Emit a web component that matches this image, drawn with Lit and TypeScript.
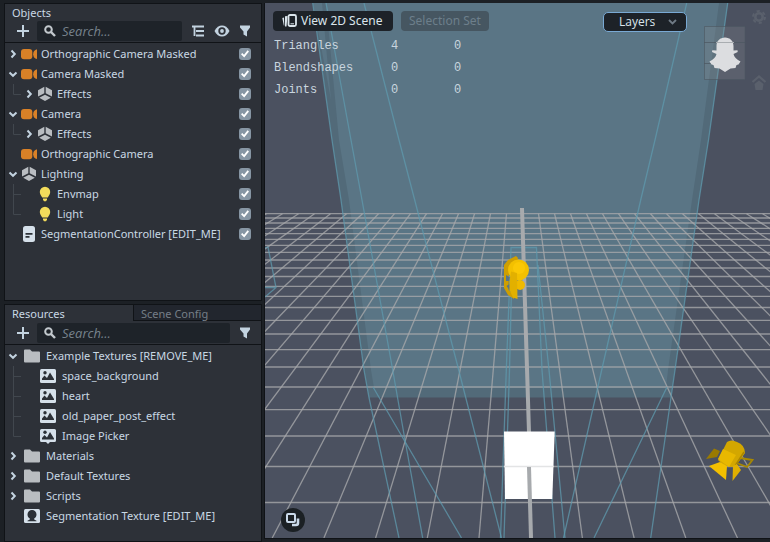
import { LitElement, html, svg, css, nothing, type TemplateResult } from "lit";
import { customElement, property } from "lit/decorators.js";

type Guide = "mid" | "last";
interface Item {
  id: string;
  name: string;
  icon: string;
  child?: Guide;
  open?: boolean;
}

const icons: Record<string, TemplateResult> = {
  camera: svg`<rect x="0" y="3" width="11.300" height="10.300" rx="3" fill="#d98127"/><path d="M16 3.300V13Q12.200 12 12.200 8.150 12.200 4.300 16 3.300Z" fill="#d98127"/>`,
  cube: svg`<g fill="#b9bdc1"><path d="M7.300 .8V7.200L1 10.600V4.200Z"/><path d="M8.700 .8V7.200L15 10.600V4.200Z"/><path d="M8 8.700l5.800 3.100L8 15 2.200 11.800Z"/></g>`,
  bulb: svg`<g fill="#f3dc5b"><path d="M8 .8a5.200 5.200 0 0 1 5.200 5.200c0 2.300-1.600 3.600-2.400 5.600H5.200C4.400 9.600 2.800 8.300 2.800 6A5.200 5.200 0 0 1 8 .8Z"/><path d="M6 12.500h4v1.200L9 15.200H7L6 13.700Z"/></g>`,
  script: svg`<rect x="2" y="0" width="12" height="16" rx="2.500" fill="#d5e0ea"/><path d="M4.500 7.800h7M4.500 10.800h4" stroke="#2b3037" stroke-width="1.800"/>`,
  folder: svg`<path d="M0 2.500Q0 1.500 1 1.500H6L8 3.500H15Q16 3.500 16 4.500V13.500Q16 14.500 15 14.500H1Q0 14.500 0 13.500Z" fill="#b9bdc1"/>`,
  image: svg`<rect x="0" y="1" width="16" height="14" rx="1.500" fill="#d5e0ea"/><circle cx="5" cy="4.700" r="1.700" fill="#2b3037"/><path d="M2 12V10.500L4.500 7.500 7 10 10 4.500 14 11V12Z" fill="#2b3037"/>`,
  picker: svg`<path d="M1.500 1H14.500Q16 1 16 2.500V12.500Q16 14 14.500 14H10L8 16 6 14H1.500Q0 14 0 12.500V2.500Q0 1 1.500 1Z" fill="#d5e0ea"/><circle cx="5" cy="4.200" r="1.700" fill="#2b3037"/><path d="M2 11.500V10L4.500 7 7 9.500 10 4 14 10.500V11.500Z" fill="#2b3037"/>`,
  segment: svg`<rect x="0" y="1" width="16" height="14" rx="1.500" fill="#d5e0ea"/><path d="M8 2a4.400 4.400 0 0 1 4.500 4.400c0 1.900-.9 3.300-2.300 4v1.100l2.300 1.200v.6H3.500v-.6l2.300-1.200v-1.100c-1.400-.7-2.300-2.100-2.300-4A4.400 4.400 0 0 1 8 2Z" fill="#2b3037"/>`,
};

const objects: Item[] = [
  { id: "ocm", name: "Orthographic Camera Masked", icon: "camera", open: false },
  { id: "cm", name: "Camera Masked", icon: "camera", open: true },
  { id: "cm-fx", name: "Effects", icon: "cube", child: "last", open: false },
  { id: "cam", name: "Camera", icon: "camera", open: true },
  { id: "cam-fx", name: "Effects", icon: "cube", child: "last", open: false },
  { id: "oc", name: "Orthographic Camera", icon: "camera" },
  { id: "lighting", name: "Lighting", icon: "cube", open: true },
  { id: "envmap", name: "Envmap", icon: "bulb", child: "mid" },
  { id: "light", name: "Light", icon: "bulb", child: "last" },
  { id: "segctl", name: "SegmentationController [EDIT_ME]", icon: "script" },
];

const resources: Item[] = [
  { id: "ext", name: "Example Textures [REMOVE_ME]", icon: "folder", open: true },
  { id: "space", name: "space_background", icon: "image", child: "mid" },
  { id: "heart", name: "heart", icon: "image", child: "mid" },
  { id: "paper", name: "old_paper_post_effect", icon: "image", child: "mid" },
  { id: "pick", name: "Image Picker", icon: "picker", child: "last" },
  { id: "mat", name: "Materials", icon: "folder", open: false },
  { id: "deft", name: "Default Textures", icon: "folder", open: false },
  { id: "scr", name: "Scripts", icon: "folder", open: false },
  { id: "segt", name: "Segmentation Texture [EDIT_ME]", icon: "segment" },
];

const reset = css`
  * { box-sizing: border-box; }
  svg { display: block; }
  button { appearance: none; border: 0; margin: 0; padding: 0; background: none; color: inherit; font: inherit; }
`;

@customElement("item-tree")
class ItemTree extends LitElement {
  @property({ attribute: false }) items: Item[] = [];
  @property({ type: Boolean }) checks = false;
  @property({ type: Boolean, reflect: true }) roomy = false;

  static styles = [reset, css`
    :host { display: block; padding-top: 1px; }
    .list { list-style: none; margin: 0; padding: 0; }
    .row { display: flex; align-items: center; height: 20px; padding-right: 10px; }
    .slot { width: 16px; height: 20px; flex: none; display: flex; align-items: center; justify-content: center; }
    .icon { flex: none; margin-right: 4px; }
    :host([roomy]) .icon { margin-left: 3px; margin-right: 6px; }
    .name { flex: 1; white-space: nowrap; line-height: 20px; }
    .check {
      appearance: none; flex: none; width: 12px; height: 12px; margin: 0;
      border-radius: 3px; background: #8796a4; display: grid; place-items: center;
    }
    .check:checked::before {
      content: ""; width: 8px; height: 8px; background: #fff;
      clip-path: polygon(0 52%, 16% 36%, 38% 58%, 82% 4%, 100% 20%, 40% 94%);
    }
  `];

  render() {
    return html`<ul class="list" role="tree">${this.items.map((i) => html`
      <li class="row" role="treeitem">
        ${i.child ? html`<svg class="slot" width="16" height="20" viewBox="0 0 16 20">
          <path d=${i.child === "mid" ? "M8.500 0V20M8 10.500H16" : "M8.500 0V10.500H16"} fill="none" stroke="#41474e"/></svg>` : nothing}
        ${i.open === undefined ? html`<span class="slot"></span>` : html`
          <button class="slot" aria-label=${(i.open ? "Collapse " : "Expand ") + i.name}>
            <svg width="10" height="10" viewBox="0 0 10 10"><path d=${i.open ? "M1.500 3.500 5 6.800 8.500 3.500" : "M3.500 1.500 6.800 5 3.500 8.500"} fill="none" stroke="#c3d3e0" stroke-width="2"/></svg>
          </button>`}
        <svg class="icon" width="16" height="16" viewBox="0 0 16 16">${icons[i.icon]}</svg>
        ${this.checks
          ? html`<label class="name" for=${i.id}>${i.name}</label><input class="check" type="checkbox" id=${i.id} checked>`
          : html`<span class="name">${i.name}</span>`}
      </li>`)}</ul>`;
  }
}

const searchIcon = html`<svg class="lens" width="12" height="12" viewBox="0 0 12 12"><circle cx="4.500" cy="4.500" r="3.300" fill="none" stroke="#c3c9ce" stroke-width="2"/><path d="M7 7l4 4" stroke="#c3c9ce" stroke-width="2.400"/></svg>`;
const plusIcon = html`<svg width="12" height="12" viewBox="0 0 12 12"><path d="M6 0V12M0 6H12" stroke="#c3d3e0" stroke-width="2"/></svg>`;
const filterIcon = html`<svg width="12" height="12" viewBox="0 0 12 12"><path d="M1 0.500H11V2.500L8 6.500V11.500L4.500 9.500V6.500L1 2.500Z" fill="#c3d3e0"/></svg>`;
const listIcon = html`<svg width="14" height="12" viewBox="0 0 14 12"><path d="M1 1.500H13M5 6H13M5 10.500H13M3.500 1.500V11" stroke="#c3d3e0" stroke-width="1.800" fill="none"/></svg>`;
const eyeIcon = html`<svg width="16" height="12" viewBox="0 0 16 12"><path d="M0.500 6C2.500 2.300 5 .5 8 .5S13.500 2.300 15.500 6C13.500 9.700 11 11.500 8 11.500S2.500 9.700.5 6Z" fill="#c3d3e0"/><circle cx="8" cy="6" r="3.700" fill="#2d3138"/><circle cx="8" cy="6" r="1.900" fill="#c3d3e0"/></svg>`;

const rows = [213.7, 218, 223, 228.3, 233.7, 239.3, 245.3, 252.3, 260, 268, 276.5, 286.3, 296.3, 307.5, 320.3, 334, 349.7, 367, 387, 409.7, 436, 466.5, 502.5];
const columns = Array.from({ length: 41 }, (_, n) => n - 20).filter((k) => k !== 0);

@customElement("scene-canvas")
class SceneCanvas extends LitElement {
  static styles = css`
    :host { display: block; }
    .scene { display: block; width: 100%; height: 100%; background: #4b5160; }
    .frustum { fill: none; stroke: #5f9aae; stroke-width: 1.3; stroke-opacity: .75; }
    .grid { stroke: #a6a8aa; stroke-width: 1.3; stroke-opacity: .8; }
    .axis { stroke: #a7aaad; stroke-width: 4; }
  `;

  render() {
    return html`<svg class="scene" viewBox="265 3 505 535" preserveAspectRatio="xMidYMid slice" role="img" aria-label="3D scene">
      <path d="M313 3H728L708.500 140 699 200 675 370 671 397.500H369L364 370 341 200 332 140Z" fill="#526a79"/>
      <path d="M313 3H322L331 100Z" fill="#5a7585"/>
      <path d="M326 3H719L701 140 692 200 668 370 666 388H374L371 370 349 200 339 140Z" fill="#5a7585"/>
      <g class="grid">
        ${rows.map((y) => svg`<path d="M265 ${y}H770"/>`)}
        ${columns.map((k) => svg`<path d="M${522.5 + 16 * k} 213.700L${530.7 + 51.7 * k} 538"/>`)}
      </g>
      <path d="M511 247.500H536.500L539 288H510Z" fill="#63a0b5" fill-opacity=".15"/>
      <g class="frustum">
        <path d="M312.700 3 332 140 341 200 364 370 369 397.500 399 538"/>
        <path d="M727.700 3 708.500 140 699 200 675 370 671 397.500 650.700 538"/>
        <path d="M326 3 351 140 362 200 392.700 370 405 440 422.700 538"/>
        <path d="M364 3 399 140 414.700 200 458.700 370 501.500 538"/>
        <path d="M686.700 3 655 140 640.700 200 601.700 370 563.500 538"/>
        <path d="M373 387 461.500 538M667 387 594 538"/>
        <path d="M265 248 268 247 276 287.500 265 297M265 287.500H276"/>
        <path d="M500.500 538 506.300 370 511 247.500H536.500L542 370 555 538"/>
        <path d="M504 538 509.500 370 511.500 288M538 265 549 370 565 538"/>
      </g>
      <path class="axis" d="M522 208 529 432"/>
      <path d="M504 431.500H554.700L552.300 499H505Z" fill="#fff"/>
      <path d="M504 466.500H553.500" stroke="#e3e4e5" stroke-width="1.500"/>
      <path class="axis" d="M529 467 531 538"/>
      <g>
        <path d="M504 265 508 260 516 256 518 258 517 262 509 268 508.500 290 514 295 514 299 508 295 504 288Z" fill="#cf9f00"/>
        <path d="M506 275 509.500 277V281H506ZM506.500 286 509.500 284 511 292Z" fill="#5a7585"/>
        <circle cx="520" cy="285" r="5" fill="#efba00"/>
        <circle cx="518.500" cy="270" r="10.500" fill="#f3c000"/>
        <circle cx="519" cy="268" r="6" fill="#fbc805"/>
        <path d="M511 271.500 517 273 517.500 299 513 297.500 509.500 290 509.500 281Z" fill="#e2b000"/>
      </g>
      <g>
        <path d="M706 459 714 448.500 720 451 717 457Z" fill="#9a7a00"/>
        <path d="M740 458 752.500 460 747 467 738 463.500" fill="none" stroke="#a98900" stroke-width="1.800"/>
        <path d="M727 442Q731 439 737 442 745 445 745 453L735 467Q725 468 718 460Z" fill="#d3a700"/>
        <path d="M723 449 736 455 729 467 718 459Z" fill="#e8b800"/>
        <path d="M744 452 735 466" stroke="#aa8600" stroke-width="1.500"/>
        <path d="M709 466 720 462 727 466 726 480Z" fill="#f3c000"/>
        <path d="M733 466 737 464 741 470 732.500 481Z" fill="#e0b000"/>
      </g>
    </svg>`;
  }
}

@customElement("app-root")
class AppRoot extends LitElement {
  static styles = [reset, css`
    :host {
      display: grid; grid-template-columns: 258px minmax(0, 1fr); column-gap: 2px;
      min-height: 100vh; padding: 3px 0 0 4px; box-sizing: border-box;
      background: #1c2025; color: #c9d8e4; font: 11px/20px "Noto Sans", "Open Sans", sans-serif;
    }
    .side { display: grid; grid-template-columns: minmax(0, 1fr); grid-template-rows: 1fr auto; row-gap: 3px; }
    .panel { background: #2d3138; border: 1px solid #101317; }
    .resources { padding-bottom: 15px; }
    .title { margin: 0; padding: 0 7px; font: inherit; line-height: 17px; }
    .tabs { display: grid; grid-template-columns: 1fr 1fr; margin-bottom: 2px; }
    .tab { height: 16px; padding: 0 7px; text-align: left; line-height: 17px; }
    .off { background: #22262e; color: #757e87; border-left: 1px solid #101317; border-bottom: 1px solid #101317; }
    .tools { display: flex; align-items: center; padding: 0 10px 1px 12px; border-bottom: 1px solid #101317; height: 22px; }
    .tool { flex: none; width: 12px; margin-left: 9px; display: grid; place-items: center; }
    .add { margin-left: 0; margin-right: 8px; }
    .eye { width: 16px; }
    .hier { width: 14px; }
    .search { flex: 1; min-width: 0; height: 20px; display: flex; align-items: center; background: #1e2329; border-radius: 2px; padding-left: 7px; gap: 6px; }
    .lens { flex: none; }
    .query { flex: 1; min-width: 0; height: 20px; border: 0; padding: 0; background: none; color: #c9d8e4; font: italic 13px/20px "Open Sans", sans-serif; }
    .query::placeholder { color: #77828c; opacity: 1; }
    .view { position: relative; margin-bottom: 3px; border: solid #101317; border-width: 0 0 1px 1px; overflow: hidden; }
    .canvas { position: absolute; inset: 0; }
    .over { position: relative; padding: 6px 8px; }
    .bar { display: flex; align-items: center; gap: 8px; padding-right: 75px; }
    .btn { display: flex; align-items: center; gap: 4px; height: 20px; padding: 0 8px; border-radius: 4px; background: #1d2228; color: #dbe5ec; font: 12px/20px "Noto Sans", sans-serif; white-space: nowrap; }
    .switch { min-width: 120px; padding-left: 9px; }
    .btn:disabled { background: #465661; color: #6d7f8b; }
    .layers { position: relative; margin: 3px 0 0 auto; }
    .pick { appearance: none; display: block; width: 84px; height: 20px; padding: 0 15px; border: 1px solid #79a9d4; border-radius: 5px; background: #1d2228; color: #dbe5ec; font: 12px/18px "Open Sans", sans-serif; }
    .caret { position: absolute; right: 10px; top: 6px; pointer-events: none; }
    .stats { border-collapse: collapse; margin-top: 3px; font: 12px/22px "Liberation Mono", monospace; color: #c9d5df; }
    .stats th, .stats td { padding: 0; font-weight: 400; text-align: left; width: 63px; }
    .stats th { width: 118px; padding-left: 1px; }
    .badge { position: absolute; top: 0; right: 0; }
    .swap { position: absolute; left: 16px; bottom: 6px; width: 24px; height: 24px; border-radius: 50%; background: #1b2024; display: grid; place-items: center; }
  `];

  render() {
    return html`
      <aside class="side">
        <section class="panel">
          <h2 class="title">Objects</h2>
          <div class="tools">
            <button class="tool add" aria-label="Add object">${plusIcon}</button>
            <label class="search">${searchIcon}<input class="query" type="text" placeholder="Search..." aria-label="Search objects"></label>
            <button class="tool hier" aria-label="Hierarchy">${listIcon}</button>
            <button class="tool eye" aria-label="Visibility">${eyeIcon}</button>
            <button class="tool" aria-label="Filter objects">${filterIcon}</button>
          </div>
          <item-tree .items=${objects} checks></item-tree>
        </section>
        <section class="panel resources">
          <div class="tabs"><button class="tab">Resources</button><button class="tab off">Scene Config</button></div>
          <div class="tools">
            <button class="tool add" aria-label="Add resource">${plusIcon}</button>
            <label class="search">${searchIcon}<input class="query" type="text" placeholder="Search..." aria-label="Search resources"></label>
            <button class="tool" aria-label="Filter resources">${filterIcon}</button>
          </div>
          <item-tree .items=${resources} roomy></item-tree>
        </section>
      </aside>
      <main class="view">
        <scene-canvas class="canvas"></scene-canvas>
        <svg class="badge" width="70" height="100" viewBox="700 3 70 100">
          <path d="M704.500 26.500H745V79.500H704.500Z" fill="#8a9094" fill-opacity=".25" stroke="#4c5761" stroke-opacity=".6"/>
          <path d="M704 42.500H745M704 63.500H712" stroke="#4c5761" stroke-opacity=".7"/>
          <path d="M725 37.500C730 37.500 733.500 41 733.500 46V50.500L737.500 50.300 737.700 52 733.500 54C734 57 737 59.500 740.500 61.500L738.500 64.500 736.500 65 735.500 68 730.500 68.500 725 72 719.500 68.500 714.500 68 713.500 65 711.500 64.500 709.500 61.500C713 59.500 716 57 716.500 54L712 52 712.300 50.300 716.500 50.500V46C716.500 41 720 37.500 725 37.500Z" fill="#dcdde0"/>
          <path d="M716 42.500H734" stroke="#a9adb1"/>
          <g stroke="#5a606c" fill="none"><circle cx="759" cy="17" r="3.700" stroke-width="2.600"/><circle cx="759" cy="17" r="6" stroke-width="2" stroke-dasharray="3.200 3.080"/><path d="M752.500 82 759 76.500 765.500 82" stroke-width="2.200"/></g>
          <path d="M754.500 84 759 80.500 763.500 84 762.500 90H755.500Z" fill="#5a606c"/>
        </svg>
        <div class="over">
          <div class="bar">
            <button class="btn switch">
              <svg width="15" height="14" viewBox="0 0 15 14"><path d="M5.500 2 3 2.300V12.500H4.500ZM2 3.500 .3 4 1.800 11.500H2.300Z" fill="#dbe5ec"/><rect x="6.500" y="1" width="7.500" height="11" rx="1.500" fill="none" stroke="#dbe5ec" stroke-width="1.800"/><path d="M8.500 9.800H12" stroke="#dbe5ec"/></svg>
              View 2D Scene</button>
            <button class="btn" disabled>Selection Set</button>
            <label class="layers">
              <select class="pick" aria-label="Layers"><option>Layers</option></select>
              <svg class="caret" width="9" height="8" viewBox="0 0 9 8"><path d="M1 2 4.500 5.500 8 2" fill="none" stroke="#6f7a85" stroke-width="1.800"/></svg>
            </label>
          </div>
          <table class="stats">
            <tr><th scope="row">Triangles</th><td>4</td><td>0</td></tr>
            <tr><th scope="row">Blendshapes</th><td>0</td><td>0</td></tr>
            <tr><th scope="row">Joints</th><td>0</td><td>0</td></tr>
          </table>
        </div>
        <button class="swap" aria-label="Swap view">
          <svg width="14" height="14" viewBox="0 0 14 14"><rect x="1" y="1" width="8" height="8" rx="1" fill="none" stroke="#c9d8e8" stroke-width="2"/><path d="M12 5.500V10Q12 12 10 12H6" fill="none" stroke="#c9d8e8" stroke-width="2.600"/></svg>
        </button>
      </main>`;
  }
}
